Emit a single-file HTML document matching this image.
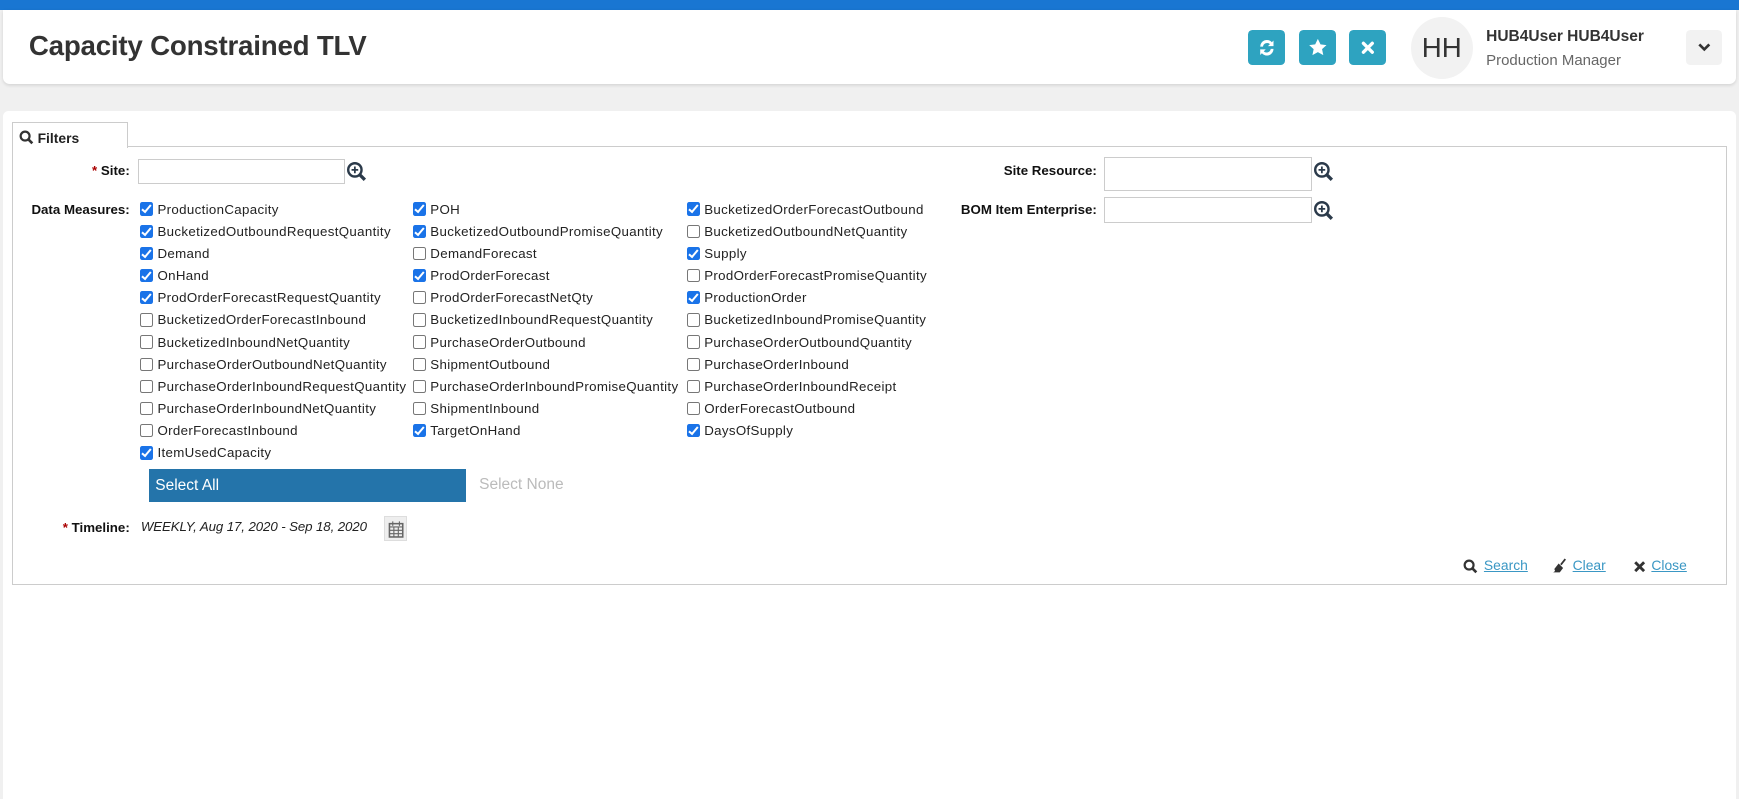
<!DOCTYPE html>
<html><head><meta charset="utf-8"><style>
html,body{margin:0;padding:0;}
body{width:1568px;height:711px;zoom:1.10906;background:#f0f0f0;font-family:"Liberation Sans",sans-serif;color:#222;position:relative;overflow:hidden;}
.abs{position:absolute;}
.topbar{left:0;top:0;width:1568px;height:9px;background:#1976d2;}
.header{left:3px;top:9px;width:1562px;height:67px;background:#fff;border-radius:0 0 6px 6px;box-shadow:0 1px 3px rgba(0,0,0,.12);}
.title{left:26px;top:27px;font-size:25px;font-weight:bold;color:#333;letter-spacing:-0.2px;}
.btn{top:27px;width:34px;height:32px;background:#2ea3c0;border-radius:4px;}
.btn svg{position:absolute;left:0;top:0}
.avatar{left:1272px;top:15px;width:56px;height:56px;border-radius:50%;background:#f2f2f2;font-size:25px;color:#333;text-align:center;line-height:56px;}
.name{left:1340px;top:25px;font-size:14px;font-weight:bold;color:#333;}
.role{left:1340px;top:47px;font-size:13.5px;color:#666;}
.dd{left:1520px;top:27px;width:33px;height:32px;background:#f2f2f2;border-radius:4px;}
.panel{left:3px;top:100px;width:1562px;height:620px;background:#fff;border-radius:5px 5px 0 0;}
.tab{left:11px;top:110px;width:103px;height:23px;border:1px solid #ccc;border-bottom:none;background:#fff;z-index:2;font-size:12.5px;font-weight:bold;}
.box{left:11px;top:132px;width:1544px;height:394px;border:1px solid #ccc;}
.lbl{font-size:12px;font-weight:bold;text-align:right;color:#111;}
.star{color:#a00;}
.inp{border:1px solid #ccc;height:23px;background:#fff;box-sizing:border-box;}
.cb{font-size:12px;color:#222;white-space:nowrap;height:20px;line-height:20px;letter-spacing:0.3px;}
.cb i{display:inline-block;width:12px;height:12px;border:1px solid #777;border-radius:2px;vertical-align:-2px;margin-right:4px;box-sizing:border-box;background:#fff;position:relative;}
.cb i.on{background:#1a73e8;border-color:#1a73e8;}
.cb i.on:after{content:"";position:absolute;left:3px;top:0px;width:3px;height:7px;border:solid #fff;border-width:0 2px 2px 0;transform:rotate(40deg);}
.col{position:absolute;top:179px;}
.sall{left:134px;top:423px;width:286px;height:30px;background:#2474aa;color:#fff;font-size:14px;line-height:30px;text-indent:6px;}
.snone{left:432px;top:429px;font-size:14px;color:#bbb;}
.link{font-size:12.5px;color:#3a97c4;text-decoration:underline;top:502px;}
</style></head><body>
<div class="abs topbar"></div>
<div class="abs header"></div>
<div class="abs title">Capacity Constrained TLV</div>
<div class="abs btn" style="left:1125px"><svg width="34" height="32" viewBox="0 0 34 32"><path d="M11 15a6 6 0 0 1 10.5-4l1.5-1.5v5h-5l1.8-1.8A3.8 3.8 0 0 0 13.5 15z M23 17a6 6 0 0 1-10.5 4L11 22.5v-5h5l-1.8 1.8A3.8 3.8 0 0 0 20.5 17z" fill="#fff"/></svg></div>
<div class="abs btn" style="left:1171px"><svg width="34" height="32" viewBox="0 0 34 32"><path d="M17 8l2.4 5 5.4.6-4 3.7 1.1 5.4-4.9-2.7-4.9 2.7 1.1-5.4-4-3.7 5.4-.6z" fill="#fff"/></svg></div>
<div class="abs btn" style="left:1216px"><svg width="34" height="32" viewBox="0 0 34 32"><path d="M13 12l8 8M21 12l-8 8" stroke="#fff" stroke-width="3" stroke-linecap="round"/></svg></div>
<div class="abs avatar">HH</div>
<div class="abs name">HUB4User HUB4User</div>
<div class="abs role">Production Manager</div>
<div class="abs dd"><svg width="33" height="32"><path d="M12 13l4.5 4.5L21 13" stroke="#333" stroke-width="2.4" fill="none"/></svg></div>
<div class="abs panel"></div>
<div class="abs tab"><svg width="14" height="14" style="position:absolute;left:5px;top:6px"><circle cx="5.5" cy="5.5" r="4" stroke="#333" stroke-width="2" fill="none"/><path d="M8.5 8.5l3.5 3.5" stroke="#333" stroke-width="2.4"/></svg><span style="position:absolute;left:22px;top:6px">Filters</span></div>
<div class="abs box"></div>

<div class="abs lbl" style="left:20px;width:97px;top:147px"><span class="star">*</span> Site:</div>
<div class="abs inp" style="left:124px;top:143px;width:187px"></div>
<svg class="abs" style="left:312px;top:145px" width="20" height="20"><circle cx="8" cy="8" r="6" stroke="#2b3a4a" stroke-width="2.2" fill="none"/><path d="M8 5v6M5 8h6" stroke="#2b3a4a" stroke-width="1.6"/><path d="M12.5 12.5l4.5 4.5" stroke="#2b3a4a" stroke-width="3"/></svg>

<div class="abs lbl" style="left:800px;width:189px;top:147px">Site Resource:</div>
<div class="abs inp" style="left:995px;top:142px;width:188px;height:30px"></div>
<svg class="abs" style="left:1184px;top:145px" width="20" height="20"><circle cx="8" cy="8" r="6" stroke="#2b3a4a" stroke-width="2.2" fill="none"/><path d="M8 5v6M5 8h6" stroke="#2b3a4a" stroke-width="1.6"/><path d="M12.5 12.5l4.5 4.5" stroke="#2b3a4a" stroke-width="3"/></svg>
<div class="abs lbl" style="left:800px;width:189px;top:182px">BOM Item Enterprise:</div>
<div class="abs inp" style="left:995px;top:178px;width:188px"></div>
<svg class="abs" style="left:1184px;top:180px" width="20" height="20"><circle cx="8" cy="8" r="6" stroke="#2b3a4a" stroke-width="2.2" fill="none"/><path d="M8 5v6M5 8h6" stroke="#2b3a4a" stroke-width="1.6"/><path d="M12.5 12.5l4.5 4.5" stroke="#2b3a4a" stroke-width="3"/></svg>

<div class="abs lbl" style="left:10px;width:107px;top:182px">Data Measures:</div>
<div class="col" style="left:126px">
<div class="cb"><i class="on"></i>ProductionCapacity</div>
<div class="cb"><i class="on"></i>BucketizedOutboundRequestQuantity</div>
<div class="cb"><i class="on"></i>Demand</div>
<div class="cb"><i class="on"></i>OnHand</div>
<div class="cb"><i class="on"></i>ProdOrderForecastRequestQuantity</div>
<div class="cb"><i></i>BucketizedOrderForecastInbound</div>
<div class="cb"><i></i>BucketizedInboundNetQuantity</div>
<div class="cb"><i></i>PurchaseOrderOutboundNetQuantity</div>
<div class="cb"><i></i>PurchaseOrderInboundRequestQuantity</div>
<div class="cb"><i></i>PurchaseOrderInboundNetQuantity</div>
<div class="cb"><i></i>OrderForecastInbound</div>
<div class="cb"><i class="on"></i>ItemUsedCapacity</div>
</div>
<div class="col" style="left:372px">
<div class="cb"><i class="on"></i>POH</div>
<div class="cb"><i class="on"></i>BucketizedOutboundPromiseQuantity</div>
<div class="cb"><i></i>DemandForecast</div>
<div class="cb"><i class="on"></i>ProdOrderForecast</div>
<div class="cb"><i></i>ProdOrderForecastNetQty</div>
<div class="cb"><i></i>BucketizedInboundRequestQuantity</div>
<div class="cb"><i></i>PurchaseOrderOutbound</div>
<div class="cb"><i></i>ShipmentOutbound</div>
<div class="cb"><i></i>PurchaseOrderInboundPromiseQuantity</div>
<div class="cb"><i></i>ShipmentInbound</div>
<div class="cb"><i class="on"></i>TargetOnHand</div>
</div>
<div class="col" style="left:619px">
<div class="cb"><i class="on"></i>BucketizedOrderForecastOutbound</div>
<div class="cb"><i></i>BucketizedOutboundNetQuantity</div>
<div class="cb"><i class="on"></i>Supply</div>
<div class="cb"><i></i>ProdOrderForecastPromiseQuantity</div>
<div class="cb"><i class="on"></i>ProductionOrder</div>
<div class="cb"><i></i>BucketizedInboundPromiseQuantity</div>
<div class="cb"><i></i>PurchaseOrderOutboundQuantity</div>
<div class="cb"><i></i>PurchaseOrderInbound</div>
<div class="cb"><i></i>PurchaseOrderInboundReceipt</div>
<div class="cb"><i></i>OrderForecastOutbound</div>
<div class="cb"><i class="on"></i>DaysOfSupply</div>
</div>

<div class="abs sall">Select All</div>
<div class="abs snone">Select None</div>

<div class="abs lbl" style="left:20px;width:97px;top:469px"><span class="star">*</span> Timeline:</div>
<div class="abs" style="left:127px;top:468px;font-size:12px;font-style:italic;color:#222;letter-spacing:-0.1px">WEEKLY, Aug 17, 2020 - Sep 18, 2020</div>
<div class="abs" style="left:346px;top:465px;width:21px;height:23px;background:#eee;border:1px solid #ddd;box-sizing:border-box"><svg width="21" height="23"><rect x="4" y="6" width="12" height="12" fill="none" stroke="#666" stroke-width="1.4"/><path d="M4 9h12M8 9v9M12 9v9M4 12h12M4 15h12M7 4v4M13 4v4" stroke="#666" stroke-width="1"/></svg></div>

<svg class="abs" style="left:1319px;top:504px" width="14" height="14"><circle cx="5.5" cy="5.5" r="4" stroke="#333" stroke-width="2" fill="none"/><path d="M8.5 8.5l3.5 3.5" stroke="#333" stroke-width="2.4"/></svg>
<div class="abs link" style="left:1338px">Search</div>
<svg class="abs" style="left:1399px;top:503px" width="15" height="15"><path d="M12 1L8 6" stroke="#333" stroke-width="1.6"/><path d="M6 5l4 4-3 4H1c2-1 2-2 1-3z" fill="#333"/></svg>
<div class="abs link" style="left:1418px">Clear</div>
<svg class="abs" style="left:1472px;top:505px" width="12" height="12"><path d="M2 2l8 8M10 2l-8 8" stroke="#333" stroke-width="2.6"/></svg>
<div class="abs link" style="left:1489px">Close</div>
</body></html>
